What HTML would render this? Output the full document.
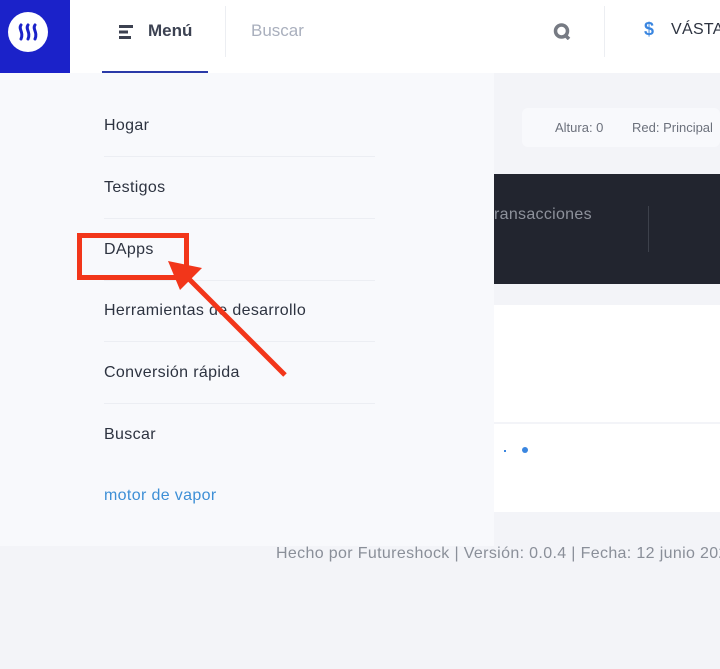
<!DOCTYPE html>
<html><head><meta charset="utf-8"><style>
body{margin:0;width:720px;height:669px;overflow:hidden;background:#f3f4f8;font-family:"Liberation Sans",sans-serif;position:relative}
.a{position:absolute}
.hdr{left:0;top:0;width:720px;height:73px;background:#fff}
.logo{left:0;top:0;width:70px;height:73px;background:#1b22c9}
.item{position:absolute;left:104px;font-size:16px;letter-spacing:0.35px;color:#2d3340}
.div{position:absolute;left:104px;width:271px;height:1px;background:#eceef3}
</style></head><body>
<div class="a hdr"></div>
<div class="a logo"><div class="a" style="left:8px;top:12px;width:40px;height:40px;border-radius:50%;background:#fff;display:flex;align-items:center;justify-content:center">
<svg width="24" height="20" viewBox="0 0 24 20"><g fill="none" stroke="#1b22c9" stroke-width="3" stroke-linecap="round"><path d="M5 3c-3 4 3 7 0 14"/><path d="M12 3c-3 4 3 7 0 14"/><path d="M19 3c-3 4 3 7 0 14"/></g></svg></div></div>
<svg class="a" style="left:119px;top:25px" width="16" height="14"><rect x="0" y="0" width="14" height="3" fill="#3c4150"/><rect x="0" y="5.5" width="9" height="3" fill="#3c4150"/><rect x="0" y="11" width="12" height="3" fill="#3c4150"/></svg>
<div class="a" style="left:148px;top:21px;font-size:17px;font-weight:bold;color:#3c4252">Menú</div>
<div class="a" style="left:102px;top:71px;width:106px;height:3px;background:#2b3aa8"></div>
<div class="a" style="left:225px;top:6px;width:1px;height:51px;background:#eceef2"></div>
<div class="a" style="left:251px;top:21px;font-size:17px;color:#a9afbd">Buscar</div>
<svg class="a" style="left:553px;top:23px" width="18" height="17"><circle cx="8.5" cy="8" r="6" fill="none" stroke="#767a83" stroke-width="3.5"/><path d="M12 12l4 4" stroke="#767a83" stroke-width="3.5"/></svg>
<div class="a" style="left:604px;top:6px;width:1px;height:51px;background:#eceef2"></div>
<div class="a" style="left:644px;top:19px;font-size:18px;font-weight:bold;color:#3a86e0">$</div>
<div class="a" style="left:671px;top:21px;font-size:16px;color:#2d3340;white-space:nowrap;letter-spacing:0.3px">VÁSTAGO</div>

<div class="a" style="left:522px;top:108px;width:198px;height:39px;background:#f8f9fc;border-radius:6px"></div>
<div class="a" style="left:555px;top:120px;font-size:13px;color:#6c717c">Altura: 0</div>
<div class="a" style="left:632px;top:120px;font-size:13px;color:#6c717c;white-space:nowrap">Red: Principal</div>
<div class="a" style="left:494px;top:174px;width:226px;height:110px;background:#22252f"></div>
<div class="a" style="left:494px;top:206px;font-size:16px;color:#8d919b;letter-spacing:0.3px">ransacciones</div>
<div class="a" style="left:648px;top:206px;width:1px;height:46px;background:#3d414b"></div>
<div class="a" style="left:494px;top:305px;width:226px;height:207px;background:#fff"></div>
<div class="a" style="left:494px;top:422px;width:226px;height:2px;background:#f3f4f8"></div>
<div class="a" style="left:522px;top:447px;width:6px;height:6px;border-radius:50%;background:#3a86e0"></div>
<div class="a" style="left:504px;top:450px;width:2px;height:2px;background:#3a86e0"></div>
<div class="a" style="left:276px;top:545px;font-size:16px;letter-spacing:0.35px;color:#8a8f99;white-space:nowrap">Hecho por Futureshock | Versión: 0.0.4 | Fecha: 12 junio 2021</div>

<div class="a" style="left:0;top:73px;width:494px;height:473px;background:#f8f9fc"></div>
<div class="item" style="top:117px">Hogar</div>
<div class="div" style="top:156px"></div>
<div class="item" style="top:179px">Testigos</div>
<div class="div" style="top:218px"></div>
<div class="item" style="top:241px">DApps</div>
<div class="div" style="top:280px"></div>
<div class="item" style="top:302px">Herramientas de desarrollo</div>
<div class="div" style="top:341px"></div>
<div class="item" style="top:364px">Conversión rápida</div>
<div class="div" style="top:403px"></div>
<div class="item" style="top:426px">Buscar</div>
<div class="item" style="top:487px;color:#3d8fd6">motor de vapor</div>

<div class="a" style="left:77px;top:233px;width:102px;height:37px;border:5px solid #f2361a"></div>
<svg class="a" style="left:0;top:0" width="720" height="669"><path d="M285 375L186 276" stroke="#f2361a" stroke-width="5"/><path d="M168 261L202 268L180 290Z" fill="#f2361a"/></svg>
</body></html>
